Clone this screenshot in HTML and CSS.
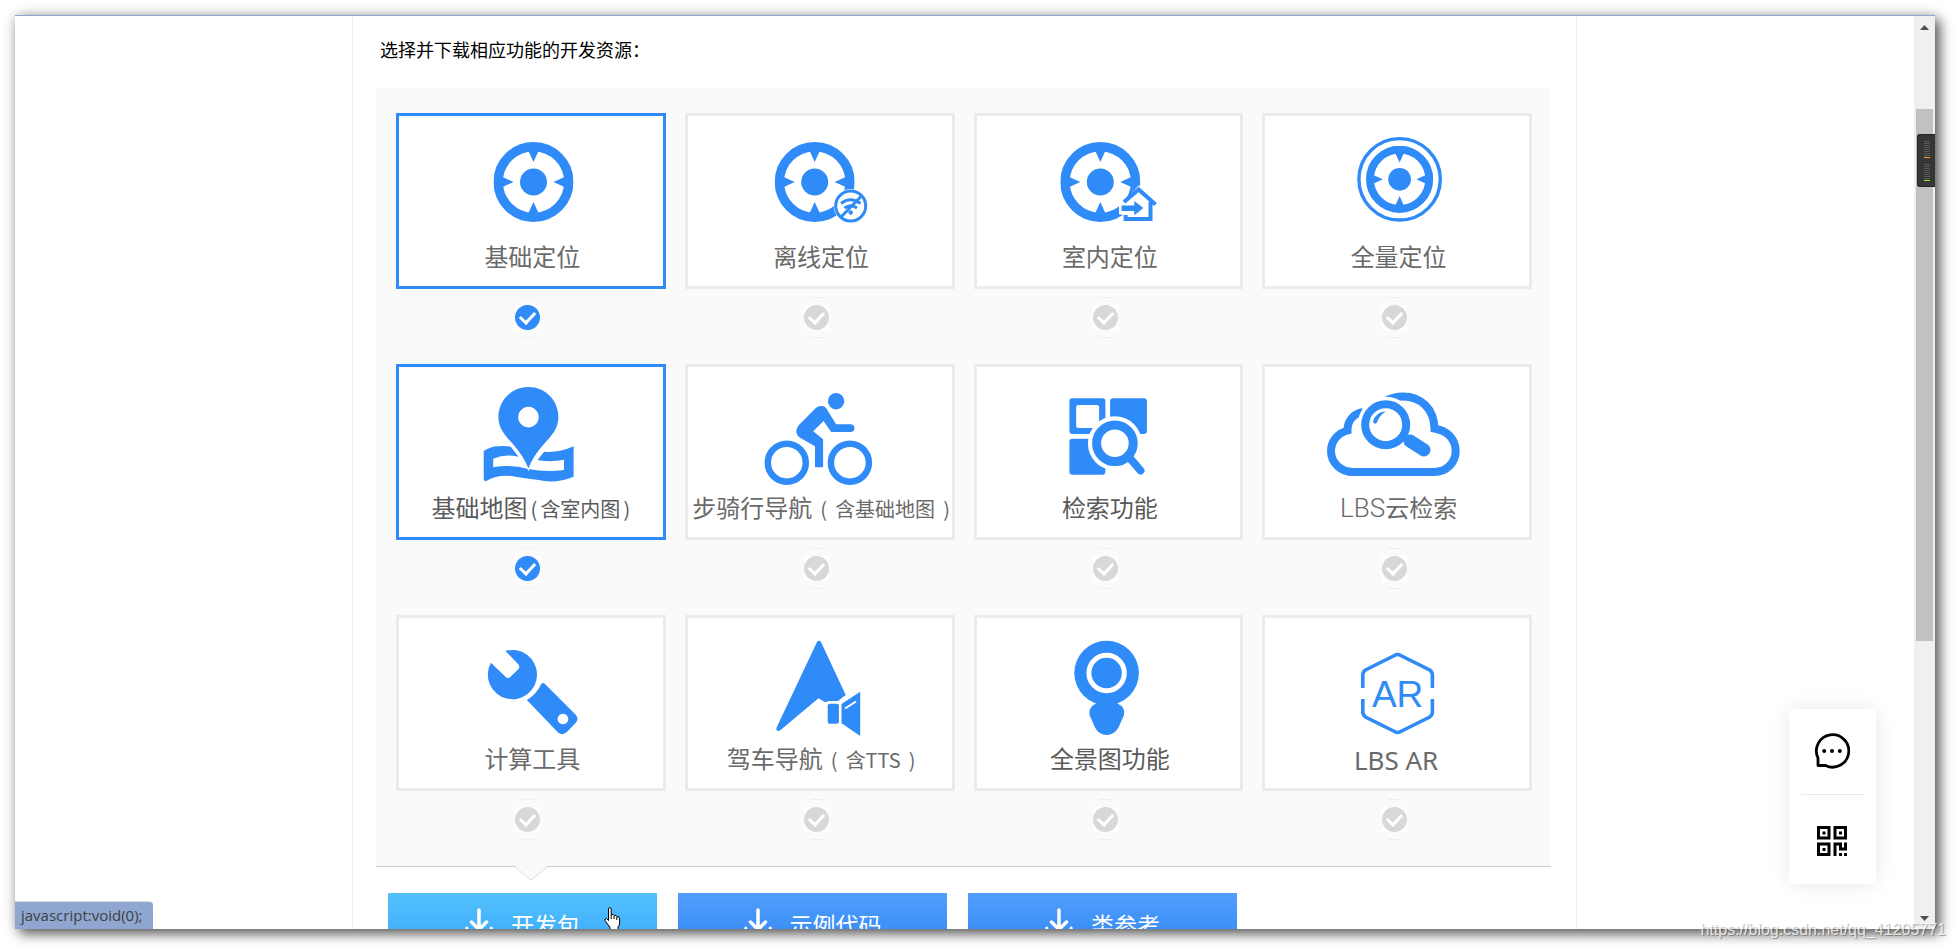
FILE: index.html
```
<!DOCTYPE html>
<html lang="zh-CN">
<head>
<meta charset="utf-8">
<title>开发资源下载</title>
<link rel="stylesheet" href="styles.css">
</head>
<body>
<svg class="sprite" aria-hidden="true">
  <symbol id="target" viewBox="-40 -40 80 80">
    <circle r="35.3" fill="none" stroke="currentColor" stroke-width="9.4"/>
    <circle r="13.5" fill="currentColor"/>
    <path fill="currentColor" d="M-5.5-32H5.5L0-20zM-5.5 32H5.5L0 20zM-32-5.5V5.5L-20 0zM32-5.5V5.5L20 0z"/>
  </symbol>
  <symbol id="download" viewBox="0 0 28 32">
    <path d="M14 2V21M6.500 14L14 21.500L21.500 14" fill="none" stroke="currentColor" stroke-width="3.500" stroke-linecap="round" stroke-linejoin="round"/>
    <path d="M1.800 20V28H26.200V20" fill="none" stroke="currentColor" stroke-width="3" stroke-linecap="round" stroke-linejoin="round"/>
  </symbol>
</svg>

<div class="window">
  <div class="viewport">
    <main class="page">
      <p class="intro">选择并下载相应功能的开发资源：</p>

      <section class="panel">
        <label class="option">
          <span class="card">
            <svg class="icon" viewBox="0 0 140 108"><use href="#target" x="32.500" y="14" width="80" height="80"/></svg>
            <span class="name">基础定位</span>
          </span>
          <span class="tick"><input type="checkbox" checked></span>
        </label>
        <label class="option">
          <span class="card">
            <svg class="icon" viewBox="0 0 140 108">
              <use href="#target" x="24.700" y="14" width="80" height="80"/>
              <circle cx="100.700" cy="78" r="17" fill="#fff"/>
              <g fill="none" stroke="currentColor" stroke-width="3">
                <circle cx="100.700" cy="78" r="15"/>
                <path d="M91 75.500Q100.500 68 110.500 75.500M94.500 80Q100.500 75.500 107 80M91 89L112 67.500"/>
              </g>
              <circle cx="100.700" cy="84.500" r="2.200" fill="currentColor"/>
            </svg>
            <span class="name">离线定位</span>
          </span>
          <span class="tick"><input type="checkbox"></span>
        </label>
        <label class="option">
          <span class="card">
            <svg class="icon" viewBox="0 0 140 108">
              <use href="#target" x="22.300" y="14" width="80" height="80"/>
              <path d="M100.600 57.500L84 75L81 75V86L85 87V95H98L117 93V60z" fill="#fff"/>
              <path d="M86 74L100.600 61.500L117.500 76.500M87.600 87V91H112.500V74" fill="none" stroke="currentColor" stroke-width="4"/>
              <path d="M83.600 77.500H96.300V73L105.400 80L96.300 87.300V83H83.600z" fill="currentColor"/>
            </svg>
            <span class="name">室内定位</span>
          </span>
          <span class="tick"><input type="checkbox"></span>
        </label>
        <label class="option">
          <span class="card">
            <svg class="icon" viewBox="0 0 140 108">
              <circle cx="72.600" cy="51.300" r="40.700" fill="none" stroke="currentColor" stroke-width="3.400"/>
              <use href="#target" x="39" y="17.700" width="67.200" height="67.200"/>
            </svg>
            <span class="name">全量定位</span>
          </span>
          <span class="tick"><input type="checkbox"></span>
        </label>

        <label class="option">
          <span class="card">
            <svg class="icon" viewBox="0 0 140 108">
              <path fill="currentColor" d="M22.700 72Q30 67.500 37 67.300Q44 66.500 49.800 67.700L57.500 77.700Q44 74.500 32.200 79.700V88.300Q50 85 67.400 90Q85 93.500 103 91V80.700Q90 83.500 76.600 81L83.100 72.700Q98 74 112.600 67.300V97.700Q95 105 77.400 101Q66 99.500 54.400 97.700Q38 94.500 25.700 101.700Q22.700 102.500 22.700 100z"/>
              <path fill="currentColor" stroke="#fff" stroke-width="2" paint-order="stroke" fill-rule="evenodd" d="M67.400 8C84 8 97.400 21 97.400 38C97.400 58 78 63 67.400 89.500C57 63 37.400 58 37.400 38C37.400 21 51 8 67.400 8zM67.400 27.800a10.300 10.300 0 1 0 .1 0z"/>
            </svg>
            <span class="name dark">基础地图<small class="tight">(</small><small>含室内图</small><small class="tight">)</small></span>
          </span>
          <span class="tick"><input type="checkbox" checked></span>
        </label>
        <label class="option">
          <span class="card">
            <svg class="icon" viewBox="0 0 140 108">
              <g fill="none" stroke="currentColor" stroke-width="6.500"><circle cx="36.800" cy="83.700" r="19"/><circle cx="99.900" cy="83.700" r="19"/></g>
              <circle cx="86.100" cy="22.300" r="8.200" fill="currentColor"/>
              <path fill="currentColor" d="M70.800 27Q74.500 26.500 76.200 29.300L86.100 45.300H101Q104.500 46 104.500 49.200T101 53H82Q81 53 80.500 52L73.500 42L63.200 52.300L73.100 60.300V88.300H65V67.300L49.600 58.500Q43.500 53.500 48.500 46.500L65.800 28.900Q68 27 70.800 27z"/>
            </svg>
            <span class="name">步骑行导航<small class="wide">(</small><small>含基础地图</small><small class="wide">)</small></span>
          </span>
          <span class="tick"><input type="checkbox"></span>
        </label>
        <label class="option">
          <span class="card">
            <svg class="icon" viewBox="0 0 140 108">
              <path fill="currentColor" fill-rule="evenodd" d="M34.400 19.300h30a3 3 0 0 1 3 3v29.700a3 3 0 0 1-3 3h-30a3 3 0 0 1-3-3v-29.700a3 3 0 0 1 3-3zM40.100 26a2 2 0 0 0-2 2v19a2 2 0 0 0 2 2h19a2 2 0 0 0 2-2v-19a2 2 0 0 0-2-2z"/>
              <rect x="72.100" y="19.300" width="36.800" height="35.700" rx="3" fill="currentColor"/>
              <rect x="31.400" y="59.700" width="36" height="36" rx="3" fill="currentColor"/>
              <circle cx="76.900" cy="64.300" r="27" fill="#fff"/>
              <circle cx="76.900" cy="64.300" r="18.300" fill="none" stroke="currentColor" stroke-width="9"/>
              <path d="M90 77L102.500 91.500" stroke="currentColor" stroke-width="8" stroke-linecap="round"/>
            </svg>
            <span class="name dark">检索功能</span>
          </span>
          <span class="tick"><input type="checkbox"></span>
        </label>
        <label class="option">
          <span class="card">
            <svg class="icon" viewBox="0 0 140 108">
              <path fill="none" stroke="currentColor" stroke-width="8" d="M36 33C25 35 20.500 43 20.500 51.500C11 54 4 62 4 72C4 84 14 93 26 93H107C120 93 128.700 83 128.700 72C128.700 60 120 51.500 107.500 49.500C107 30 94 17.500 76 17.500C69 17.500 64 19 58 22"/>
              <circle cx="58.700" cy="45.700" r="28" fill="#fff"/>
              <circle cx="58.700" cy="45.700" r="20.500" fill="none" stroke="currentColor" stroke-width="8"/>
              <path d="M83 62L97 71" stroke="currentColor" stroke-width="13" stroke-linecap="round"/>
              <path d="M46 43Q48 33 59 32.500Q52 36.500 50 43.500Q48 46 46 43z" fill="currentColor"/>
            </svg>
            <span class="name"><span class="latin">LBS</span>云检索</span>
          </span>
          <span class="tick"><input type="checkbox"></span>
        </label>

        <label class="option">
          <span class="card">
            <svg class="icon" viewBox="0 0 140 108">
              <path fill="currentColor" d="M44.500 21A24.600 24.600 0 1 1 29.900 32.700L45 47.200Q47 49 49 47.200L57.500 39Q59.200 37 57.500 34.500z"/>
              <path fill="currentColor" fill-rule="evenodd" d="M80.500 53.600Q82 52.300 83.500 53.600L115 85Q118 89 115 92.500L106 102Q101.500 106 97 102.500L65.900 70Q76 64 80.500 53.600zM101.900 83.700a5.300 5.300 0 1 0 .1 0z"/>
            </svg>
            <span class="name">计算工具</span>
          </span>
          <span class="tick"><input type="checkbox"></span>
        </label>
        <label class="option">
          <span class="card">
            <svg class="icon" viewBox="0 0 140 108">
              <path fill="currentColor" d="M67 12Q69 9.500 71 12L95.700 65L88 71H79L75.400 72.300L68.500 68.300L30 100.500Q26 102 26.400 98z"/>
              <rect x="77.700" y="73.700" width="11.200" height="20" rx="2" fill="currentColor"/>
              <path fill="currentColor" d="M91.500 74L110.200 61.700V106L91.500 93.300z"/>
              <path d="M95 78.500L106 71.500" stroke="#fff" stroke-width="2"/>
            </svg>
            <span class="name">驾车导航<small class="wide">(</small><small>含TTS</small><small class="wide">)</small></span>
          </span>
          <span class="tick"><input type="checkbox"></span>
        </label>
        <label class="option">
          <span class="card">
            <svg class="icon" viewBox="0 0 140 108">
              <circle cx="68.600" cy="43" r="32.300" fill="currentColor"/>
              <circle cx="68.600" cy="43" r="17.700" fill="none" stroke="#fff" stroke-width="5"/>
              <path fill="currentColor" d="M56 70L58 73.500Q50 77.500 51.500 85L57 97.500Q61 105 68.600 105T80.500 97.500L86 85Q88 77.500 79.500 73.500L82 70z"/>
            </svg>
            <span class="name dark">全景图功能</span>
          </span>
          <span class="tick"><input type="checkbox"></span>
        </label>
        <label class="option">
          <span class="card">
            <svg class="icon" viewBox="0 0 140 108">
              <path fill="none" stroke="currentColor" stroke-width="3.600" d="M35.800 58V45Q35.800 42 38.500 40L67.500 25.500Q70.600 23.600 73.700 25.500L102.700 40Q105.400 42 105.400 45V58M35.800 69V82Q35.800 85 38.500 87L67.500 101.500Q70.600 103.400 73.700 101.500L102.700 87Q105.400 85 105.400 82V69"/>
              <text class="ar" x="70.600" y="77" text-anchor="middle">AR</text>
            </svg>
            <span class="name lbs">LBS AR</span>
          </span>
          <span class="tick"><input type="checkbox"></span>
        </label>

        <svg class="pointer" viewBox="0 0 32 15"><path d="M0 0L16 14L32 0" fill="#fafafa"/><path d="M0 1L16 14L32 1" fill="none" stroke="#ddd"/></svg>
      </section>

      <div class="downloads">
        <button type="button" class="download active"><svg viewBox="0 0 28 32"><use href="#download"/></svg>开发包</button>
        <button type="button" class="download"><svg viewBox="0 0 28 32"><use href="#download"/></svg>示例代码</button>
        <button type="button" class="download"><svg viewBox="0 0 28 32"><use href="#download"/></svg>类参考</button>
      </div>
    </main>
  </div>

  <div class="scrollbar">
    <svg class="arrow" viewBox="0 0 9 5"><path d="M0 5L4.500 0L9 5z"/></svg>
    <div class="track"><div class="thumb"></div></div>
    <svg class="arrow" viewBox="0 0 9 5"><path d="M0 0L4.500 5L9 0z"/></svg>
  </div>

  <div class="meter"><i class="orange"></i><i class="green"></i></div>

  <aside class="float">
    <button type="button" aria-label="咨询">
      <svg viewBox="0 0 36 36" width="36" height="36"><path d="M4 32.500V25A16.200 16.200 0 1 1 11.500 32.500z" fill="none" stroke="#000" stroke-width="2.800" stroke-linejoin="round"/><circle cx="10.200" cy="18" r="2"/><circle cx="18" cy="18" r="2"/><circle cx="25.800" cy="18" r="2"/></svg>
    </button>
    <button type="button" aria-label="二维码">
      <svg viewBox="0 0 30 30" width="30" height="30"><g fill="none" stroke="#000" stroke-width="3"><path d="M1.500 1.500h10.500v10.500h-10.500zM18 1.500h10.500v10.500h-10.500zM1.500 18h10.500v10.500h-10.500z"/><path d="M18 30V18H23.500V23H28.500V16.500"/></g><path d="M5.500 5.500h3v3h-3zM22 5.500h3v3h-3zM5.500 22h3v3h-3zM22 27h3v3h-3zM27 27h3v3h-3z"/></svg>
    </button>
  </aside>

  <svg class="cursor" viewBox="0 0 17 22"><path d="M4.500 13.500V2Q4.500 .6 5.800 .6T7.200 2V8Q9.500 6.500 10 8.500Q12.300 7.500 12.800 9.500Q15.600 9 15.600 12V16Q15.600 18.500 14 20V23H6V20.500L1 13.500Q.5 11.500 2.500 11.500z" fill="#fff" stroke="#000"/><path d="M7.200 8V12M10 9V12M12.800 10V13" stroke="#000"/></svg>
  <div class="status">javascript:void(0);</div>
</div>
<div class="watermark">https://blog.csdn.net/qq_41205771</div>
</body>
</html>
```
FILE: styles.css
```
* { box-sizing: border-box; }

body {
  margin: 0;
  height: 100vh;
  padding: 15px 20px 20px 15px;
  overflow: hidden;
  position: relative;
  background: #fff;
  color: #000;
  font-family: "Noto Sans", "Noto Sans CJK SC", sans-serif;
}

.sprite { position: absolute; width: 0; height: 0; }

.window {
  position: relative;
  display: flex;
  height: 100%;
  border-top: 1px solid #8fa8d0;
  background: #fff;
  box-shadow: 5px 5px 12px rgba(0, 0, 0, .6), 0 0 12px rgba(0, 0, 0, .2);
}

.viewport { flex: 1; overflow: hidden; }

.page {
  max-width: 1225px;
  min-height: 100%;
  margin: 0 auto;
  padding: 19px 25px 0 23px;
  border: solid #ebebeb;
  border-width: 0 1px;
}

.intro {
  margin: 0 0 25px;
  padding-left: 4px;
  font-family: "Noto Sans CJK SC", sans-serif;
  font-size: 18px;
  line-height: 28px;
}

.panel {
  position: relative;
  display: grid;
  grid-template-columns: repeat(4, 1fr);
  column-gap: 19px;
  padding: 25px 19px 0 20px;
  border-bottom: 1px solid #ccc;
  background: #fafafa;
}

.option { display: flex; flex-direction: column; }

.card {
  display: flex;
  flex-direction: column;
  align-items: center;
  height: 176px;
  padding-top: 12px;
  border: 3px solid #ebebeb;
  background: #fff;
}

.option:has(:checked) .card { border-color: #2f8bf7; }

.icon { width: 140px; height: 108px; color: #2f8bf7; }

.ar {
  fill: currentColor;
  font-family: "Liberation Sans", sans-serif;
  font-size: 37px;
}

.name {
  margin-top: 4px;
  padding-left: 3px;
  color: #6a6a6a;
  font-family: "Noto Sans CJK SC", sans-serif;
  font-size: 24px;
  line-height: 32px;
  white-space: nowrap;
}
.name.dark { color: #5a5a5a; }
.name.lbs { padding: 2px 2px 0 0; font-family: "Noto Sans", sans-serif; font-size: 26px; }
.name small { font-size: 20px; }
.name .tight { margin: 0 3px; }
.name .wide { margin: 0 8px; }
.name .wide:last-child { margin-right: 0; }
.latin { font-family: Roboto, sans-serif; font-weight: 300; font-size: 26px; }

.tick {
  display: flex;
  align-items: center;
  justify-content: center;
  height: 41px;
  margin: 8px 6px 26px 0;
  background:
    linear-gradient(#e1f2fb, #e1f2fb) top / 12px 1px no-repeat,
    linear-gradient(#e1f2fb, #e1f2fb) bottom / 12px 1px no-repeat;
}

.tick input {
  appearance: none;
  display: grid;
  place-items: center;
  width: 25px;
  height: 25px;
  margin: 0;
  background: radial-gradient(circle, #d8d8d8 12px, #fff 13px);
}
.tick input:checked { background: radial-gradient(circle, #2f8bf7 12px, #fff 13px); }
.tick input::before {
  content: "";
  width: 12px;
  height: 7px;
  margin-bottom: 4px;
  border: solid #fff;
  border-width: 0 0 3px 3px;
  transform: rotate(-47deg);
}

.pointer {
  position: absolute;
  top: 100%;
  left: 139px;
  width: 32px;
  height: 15px;
}

.downloads {
  display: grid;
  grid-template-columns: repeat(4, 1fr);
  gap: 21px;
  padding: 26px 24px 0 12px;
}

.download {
  display: flex;
  align-items: center;
  justify-content: center;
  gap: 18px;
  height: 62px;
  padding: 0;
  border: 0;
  background: linear-gradient(#529efd, #2d84f2);
  color: #fff;
  font-family: "Noto Sans CJK SC", sans-serif;
  font-size: 23px;
}
.download.active { background: linear-gradient(#54c1fc, #36a6fc); }
.download svg { width: 28px; height: 32px; }

.scrollbar {
  display: flex;
  flex-direction: column;
  align-items: center;
  width: 21px;
  padding: 9px 0 8px;
  background: #f0f0f0;
}
.arrow { width: 9px; height: 5px; fill: #505050; }
.track { flex: 1; width: 17px; padding: 79px 0 275px; }
.thumb { height: 100%; background: #c1c1c1; }

.meter {
  position: absolute;
  top: 118px;
  right: 0;
  display: flex;
  flex-direction: column;
  align-items: center;
  gap: 6px;
  width: 18px;
  height: 53px;
  padding-top: 6px;
  border: 1px solid #222;
  border-right: 0;
  border-radius: 3px 0 0 3px;
  background: #363636;
}
.meter i {
  width: 6px;
  height: 17px;
  border-bottom: 1px solid;
  background: repeating-linear-gradient(#585858 0 1px, #363636 1px 2px) padding-box;
}
.meter .orange { border-color: #f5a623; }
.meter .green { border-color: #8ef01f; }

.float {
  position: absolute;
  right: 59px;
  bottom: 45px;
  width: 87px;
  padding: 0 12px;
  border-radius: 5px;
  background: #fff;
  box-shadow: 0 0 20px rgba(0, 0, 0, .1);
}
.float button {
  display: flex;
  align-items: center;
  justify-content: center;
  width: 100%;
  height: 85px;
  padding: 0 1px 2px 0;
  border: 0;
  background: none;
}
.float button + button { height: 90px; border-top: 1px solid #e8e8e8; padding-top: 4px; }

.cursor { position: absolute; left: 589px; bottom: 0; width: 17px; height: 22px; }

.status {
  position: absolute;
  left: 0;
  bottom: 0;
  padding: 0 10px 0 6px;
  border-top: 1px solid #dcdcdc;
  border-radius: 0 4px 0 0;
  background: #8fa7d0;
  color: #3c4043;
  font-family: "Open Sans", sans-serif;
  font-size: 15px;
  line-height: 27px;
}

.watermark {
  position: absolute;
  right: 9px;
  bottom: 9px;
  color: rgba(255, 255, 255, .8);
  font-family: "Liberation Sans", sans-serif;
  font-size: 16px;
  line-height: 20px;
  text-shadow: 1px 1px 1px rgba(0, 0, 0, .35);
}
```
